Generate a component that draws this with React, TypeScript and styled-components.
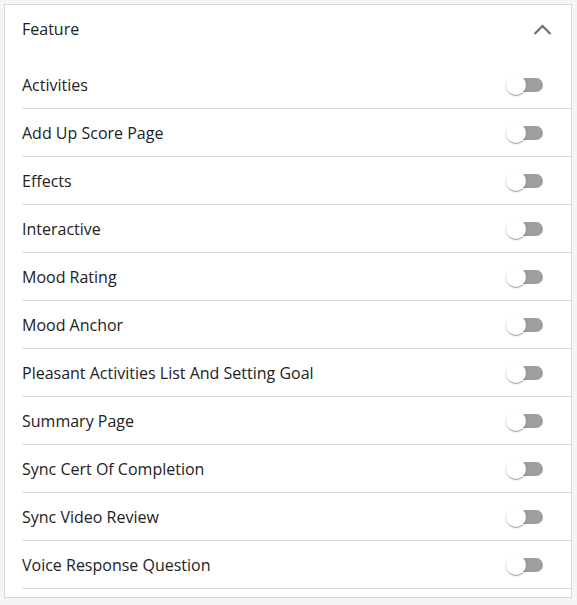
import { useState } from "react";
import styled, { createGlobalStyle } from "styled-components";

const features = [
  "Activities",
  "Add Up Score Page",
  "Effects",
  "Interactive",
  "Mood Rating",
  "Mood Anchor",
  "Pleasant Activities List And Setting Goal",
  "Summary Page",
  "Sync Cert Of Completion",
  "Sync Video Review",
  "Voice Response Question",
];

const GlobalStyle = createGlobalStyle`
  html, body {
    margin: 0;
    padding: 0;
    background: #f5f5f7;
    font-family: "Open Sans", "Liberation Sans", sans-serif;
  }
`;

export default function App() {
  const [enabled, setEnabled] = useState<Record<string, boolean>>({});

  const toggle = (name: string) => {
    setEnabled((prev) => ({ ...prev, [name]: !prev[name] }));
  };

  return (
    <>
      <GlobalStyle />
      <Page>
        <Card>
          <Header>
            <Title>Feature</Title>
            <svg width="20" height="12" viewBox="0 0 20 12">
              <polyline
                points="1.5,10 9.5,2 17.5,10"
                fill="none"
                stroke="#707070"
                strokeWidth="2.2"
              />
            </svg>
          </Header>
          <List>
            {features.map((name) => (
              <Row key={name}>
                <Label>{name}</Label>
                <Switch onClick={() => toggle(name)}>
                  <Track $on={!!enabled[name]} />
                  <Thumb $on={!!enabled[name]} />
                </Switch>
              </Row>
            ))}
          </List>
        </Card>
      </Page>
    </>
  );
}

const Page = styled.div`
  padding: 4px 5px 7px 4px;
`;

const Card = styled.div`
  background: #ffffff;
  border: 1px solid #d6d6d6;
  padding-bottom: 8px;
`;

const Header = styled.div`
  height: 48px;
  display: flex;
  align-items: center;
  justify-content: space-between;
  padding: 0 18px 0 17px;
  margin-bottom: 8px;

  svg {
    margin-top: 1px;
  }
`;

const Title = styled.div`
  font-size: 16px;
  color: #222222;
`;

const List = styled.div`
  padding-left: 17px;
`;

const Row = styled.div`
  height: 47px;
  display: flex;
  align-items: center;
  justify-content: space-between;
  border-bottom: 1px solid #d9d9d9;
  padding-right: 28px;
`;

const Label = styled.div`
  font-size: 16px;
  color: #222222;
`;

const Switch = styled.div`
  position: relative;
  width: 37px;
  height: 20px;
  cursor: pointer;
  margin-top: 1px;
`;

const Track = styled.div<{ $on: boolean }>`
  position: absolute;
  left: 3px;
  top: 3px;
  width: 34px;
  height: 14px;
  border-radius: 7px;
  background: ${(p) => (p.$on ? "#90caf9" : "#9e9e9e")};
`;

const Thumb = styled.div<{ $on: boolean }>`
  position: absolute;
  top: 0;
  left: ${(p) => (p.$on ? "17px" : "0")};
  width: 20px;
  height: 20px;
  border-radius: 50%;
  background: ${(p) => (p.$on ? "#1976d2" : "#ffffff")};
  box-shadow: 0 2px 1px -1px rgba(0, 0, 0, 0.2), 0 1px 1px 0 rgba(0, 0, 0, 0.14),
    0 1px 3px 0 rgba(0, 0, 0, 0.12);
`;
